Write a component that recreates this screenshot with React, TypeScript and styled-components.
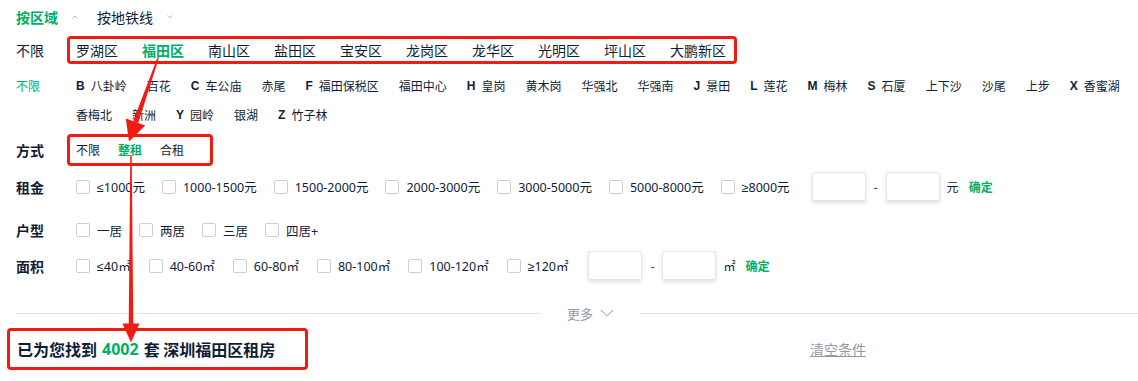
import React from 'react';
import styled, { createGlobalStyle } from 'styled-components';

const GREEN = '#00ae66';
const TEXT = '#101d37';
const RED = '#f21b12';
const GRAY = '#9399a5';

const Global = createGlobalStyle`
  html, body { margin: 0; padding: 0; background: #fff; }
  body {
    font-family: "Noto Sans CJK SC", "Noto Sans", sans-serif;
    color: ${TEXT};
  }
  * { box-sizing: border-box; }
`;

const Page = styled.div`
  position: relative;
  width: 1138px;
  height: 381px;
  overflow: hidden;
`;

const Filters = styled.div`
  padding-left: 16px;
`;

const TabRow = styled.div`
  display: flex;
  align-items: center;
  height: 34px;
  gap: 19px;
`;

const Tab = styled.div<{ $active?: boolean }>`
  display: flex;
  align-items: center;
  gap: 14px;
  font-size: 14px;
  line-height: 20px;
  font-weight: ${(p) => (p.$active ? 700 : 400)};
  color: ${(p) => (p.$active ? GREEN : TEXT)};
`;

const Row = styled.div<{ $mt: number; $h: number }>`
  display: flex;
  align-items: center;
  margin-top: ${(p) => p.$mt}px;
  height: ${(p) => p.$h}px;
`;

const Label = styled.div<{ $bold?: boolean; $green?: boolean; $size?: number }>`
  width: 60px;
  flex-shrink: 0;
  font-size: ${(p) => p.$size ?? 14}px;
  font-weight: ${(p) => (p.$bold ? 700 : 400)};
  color: ${(p) => (p.$green ? GREEN : TEXT)};
  line-height: 20px;
`;

const Marked = styled.div<{ $gap: number; $pr: number }>`
  display: flex;
  align-items: center;
  gap: ${(p) => p.$gap}px;
  height: 100%;
  margin-left: -9px;
  padding: 0 ${(p) => p.$pr}px 0 6px;
  border: 3px solid ${RED};
  border-radius: 4px;
`;

const Option = styled.span<{ $active?: boolean; $size: number }>`
  font-size: ${(p) => p.$size}px;
  line-height: 20px;
  white-space: nowrap;
  font-weight: ${(p) => (p.$active ? 700 : 400)};
  color: ${(p) => (p.$active ? GREEN : TEXT)};
`;

const SubRow = styled.div`
  display: flex;
  align-items: flex-start;
  margin-top: 7px;
`;

const SubLabel = styled(Label)`
  line-height: 29px;
`;

const SubList = styled.div`
  flex: 1;
  display: flex;
  flex-wrap: wrap;
  column-gap: 20px;
  padding-right: 8px;
`;

const SubItem = styled.span`
  display: flex;
  align-items: center;
  height: 29px;
  font-size: 12px;
  white-space: nowrap;
`;

const Letter = styled.b`
  font-family: "Liberation Sans", "Noto Sans", sans-serif;
  font-weight: 700;
  font-size: 12px;
  margin-right: 6px;
`;

const Checks = styled.div<{ $gap: number }>`
  display: flex;
  align-items: center;
  gap: ${(p) => p.$gap}px;
`;

const Check = styled.label`
  display: flex;
  align-items: center;
  gap: 7px;
  font-family: "Noto Sans", "Liberation Sans", "Noto Sans CJK SC", sans-serif;
  font-size: 12.5px;
  white-space: nowrap;
`;

const Box = styled.span`
  width: 14px;
  height: 14px;
  border: 1px solid #cfcfcf;
  border-radius: 2px;
  background: #fff;
  flex-shrink: 0;
`;

const Range = styled.div<{ $ml: number }>`
  display: flex;
  align-items: center;
  margin-left: ${(p) => p.$ml}px;
  font-size: 12px;
`;

const Input = styled.div`
  width: 54px;
  height: 29px;
  border: 1px solid #e4e4e4;
  border-radius: 2px;
  background: #fff;
  box-shadow: 0 2px 4px rgba(0, 0, 0, 0.12);
`;

const Dash = styled.span`
  width: 20px;
  text-align: center;
`;

const Unit = styled.span`
  margin-left: 7px;
`;

const Confirm = styled.span`
  margin-left: 10px;
  color: ${GREEN};
  font-weight: 700;
`;

const Divider = styled.div`
  display: flex;
  align-items: center;
  height: 20px;
  margin-top: 23px;
`;

const Line = styled.div<{ $w?: number }>`
  height: 1px;
  background: #e4e4e4;
  ${(p) => (p.$w ? `width: ${p.$w}px; flex-shrink: 0;` : 'flex: 1;')}
`;

const More = styled.div`
  display: flex;
  align-items: center;
  gap: 7px;
  padding: 0 26px;
  font-size: 13px;
  color: ${GRAY};
`;

const ResultRow = styled.div`
  display: flex;
  align-items: center;
  margin-top: 5px;
  height: 42px;
`;

const ResultBox = styled.div`
  display: flex;
  align-items: center;
  width: 301px;
  height: 100%;
  margin-left: -9px;
  padding-left: 7px;
  border: 3px solid ${RED};
  border-radius: 4px;
  font-size: 16px;
  font-weight: 700;
  white-space: nowrap;
`;

const Count = styled.span`
  color: ${GREEN};
  font-family: "Noto Sans", sans-serif;
  margin: 0 5px;
`;

const Clear = styled.span`
  margin-left: 502px;
  font-size: 14px;
  color: ${GRAY};
  text-decoration: underline;
`;

const Overlay = styled.svg`
  position: absolute;
  left: 0;
  top: 0;
  pointer-events: none;
`;

const Caret = ({ up }: { up?: boolean }) => (
  <svg width="6" height="4" viewBox="0 0 6 4">
    <path
      d={up ? 'M0.5 3.5 L3 1 L5.5 3.5' : 'M0.5 0.5 L3 3 L5.5 0.5'}
      fill="none"
      stroke="#b9bdc6"
      strokeWidth="1"
    />
  </svg>
);

const districts = ['罗湖区', '福田区', '南山区', '盐田区', '宝安区', '龙岗区', '龙华区', '光明区', '坪山区', '大鹏新区'];

const subs: [string, string][] = [
  ['B', '八卦岭'], ['', '百花'], ['C', '车公庙'], ['', '赤尾'], ['F', '福田保税区'],
  ['', '福田中心'], ['H', '皇岗'], ['', '黄木岗'], ['', '华强北'], ['', '华强南'],
  ['J', '景田'], ['L', '莲花'], ['M', '梅林'], ['S', '石厦'], ['', '上下沙'],
  ['', '沙尾'], ['', '上步'], ['X', '香蜜湖'], ['', '香梅北'], ['', '新洲'],
  ['Y', '园岭'], ['', '银湖'], ['Z', '竹子林'],
];

const rents = ['≤1000元', '1000-1500元', '1500-2000元', '2000-3000元', '3000-5000元', '5000-8000元', '≥8000元'];
const layouts = ['一居', '两居', '三居', '四居+'];
const areas = ['≤40㎡', '40-60㎡', '60-80㎡', '80-100㎡', '100-120㎡', '≥120㎡'];

export default function App() {
  return (
    <Page>
      <Global />
      <Filters>
        <TabRow>
          <Tab $active>
            按区域 <Caret up />
          </Tab>
          <Tab>
            按地铁线 <Caret />
          </Tab>
        </TabRow>

        <Row $mt={2} $h={28}>
          <Label>不限</Label>
          <Marked $gap={24} $pr={8}>
            {districts.map((d) => (
              <Option key={d} $size={14} $active={d === '福田区'}>
                {d}
              </Option>
            ))}
          </Marked>
        </Row>

        <SubRow>
          <SubLabel $green $size={12}>
            不限
          </SubLabel>
          <SubList>
            {subs.map(([l, n]) => (
              <SubItem key={n}>
                {l && <Letter>{l}</Letter>}
                {n}
              </SubItem>
            ))}
          </SubList>
        </SubRow>

        <Row $mt={5} $h={32}>
          <Label $bold>方式</Label>
          <Marked $gap={18} $pr={26}>
            <Option $size={12}>不限</Option>
            <Option $size={12} $active>
              整租
            </Option>
            <Option $size={12}>合租</Option>
          </Marked>
        </Row>

        <Row $mt={6} $h={29}>
          <Label $bold>租金</Label>
          <Checks $gap={17}>
            {rents.map((r) => (
              <Check key={r}>
                <Box />
                {r}
              </Check>
            ))}
          </Checks>
          <Range $ml={22}>
            <Input />
            <Dash>-</Dash>
            <Input />
            <Unit>元</Unit>
            <Confirm>确定</Confirm>
          </Range>
        </Row>

        <Row $mt={15} $h={28}>
          <Label $bold>户型</Label>
          <Checks $gap={17}>
            {layouts.map((r) => (
              <Check key={r}>
                <Box />
                {r}
              </Check>
            ))}
          </Checks>
        </Row>

        <Row $mt={7} $h={29}>
          <Label $bold>面积</Label>
          <Checks $gap={18}>
            {areas.map((r) => (
              <Check key={r}>
                <Box />
                {r}
              </Check>
            ))}
          </Checks>
          <Range $ml={20}>
            <Input />
            <Dash>-</Dash>
            <Input />
            <Unit>㎡</Unit>
            <Confirm>确定</Confirm>
          </Range>
        </Row>

        <Divider>
          <Line $w={525} />
          <More>
            更多
            <svg width="14" height="8" viewBox="0 0 14 8">
              <path d="M1 1 L7 7 L13 1" fill="none" stroke="#b9bdc6" strokeWidth="1.2" />
            </svg>
          </More>
          <Line />
        </Divider>

        <ResultRow>
          <ResultBox>
            已为您找到<Count>4002</Count>套 深圳福田区租房
          </ResultBox>
          <Clear>清空条件</Clear>
        </ResultRow>
      </Filters>

      <Overlay width="1138" height="381" viewBox="0 0 1138 381">
        <polygon points="157.3,58 158.7,58.4 138.2,122.9 133.2,121.3" fill={RED} />
        <polygon points="125.8,118.6 145.2,125.4 129,141.5" fill={RED} />
        <polygon points="130.3,155 131.7,155 133.3,326 128.7,326" fill={RED} />
        <polygon points="122.5,323.5 139.5,323.5 131,342.5" fill={RED} />
      </Overlay>
    </Page>
  );
}
